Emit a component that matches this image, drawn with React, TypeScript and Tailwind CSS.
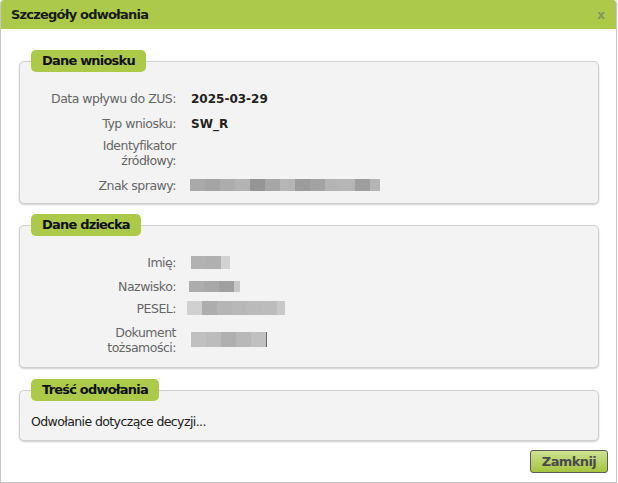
import React from "react";

type Block = { w: string; c: string };

const znak: Block[] = [
  { w: "w-[15px]", c: "bg-[#a9a9a9]" },
  { w: "w-[15px]", c: "bg-[#a4a4a4]" },
  { w: "w-[15px]", c: "bg-[#adadad]" },
  { w: "w-[15px]", c: "bg-[#b3b3b3]" },
  { w: "w-[15px]", c: "bg-[#959595]" },
  { w: "w-[15px]", c: "bg-[#a6a6a6]" },
  { w: "w-[15px]", c: "bg-[#b5b5b5]" },
  { w: "w-[15px]", c: "bg-[#9c9c9c]" },
  { w: "w-[15px]", c: "bg-[#a3a3a3]" },
  { w: "w-[15px]", c: "bg-[#b4b4b4]" },
  { w: "w-[15px]", c: "bg-[#b5b5b5]" },
  { w: "w-[15px]", c: "bg-[#9e9e9e]" },
  { w: "w-[10px]", c: "bg-[#b5b5b5]" },
];

const imie: Block[] = [
  { w: "w-[15px]", c: "bg-[#b2b2b2]" },
  { w: "w-[15px]", c: "bg-[#b0b0b0]" },
  { w: "w-[9px]", c: "bg-[#d2d2d2]" },
];

const nazwisko: Block[] = [
  { w: "w-[15px]", c: "bg-[#adadad]" },
  { w: "w-[15px]", c: "bg-[#a8a8a8]" },
  { w: "w-[15px]", c: "bg-[#a0a0a0]" },
  { w: "w-[6px]", c: "bg-[#c8c8c8]" },
];

const pesel: Block[] = [
  { w: "w-[15px]", c: "bg-[#d0d0d0]" },
  { w: "w-[15px]", c: "bg-[#adadad]" },
  { w: "w-[15px]", c: "bg-[#b5b5b5]" },
  { w: "w-[15px]", c: "bg-[#b8b8b8]" },
  { w: "w-[15px]", c: "bg-[#bababa]" },
  { w: "w-[15px]", c: "bg-[#bcbcbc]" },
  { w: "w-[8px]", c: "bg-[#c8c8c8]" },
];

const dokument: Block[] = [
  { w: "w-[15px]", c: "bg-[#c0c0c0]" },
  { w: "w-[15px]", c: "bg-[#bcbcbc]" },
  { w: "w-[15px]", c: "bg-[#b0b0b0]" },
  { w: "w-[15px]", c: "bg-[#b8b8b8]" },
  { w: "w-[15px]", c: "bg-[#c0c0c0]" },
  { w: "w-px", c: "bg-[#666666]" },
];

const Blur = ({ blocks, h, ml }: { blocks: Block[]; h: string; ml: string }) => (
  <div className={`flex ${h} ${ml}`}>
    {blocks.map((b, i) => (
      <span key={i} className={`${b.w} ${b.c} h-full`} />
    ))}
  </div>
);

const Section = ({
  title,
  box,
  children,
}: {
  title: string;
  box: string;
  children: React.ReactNode;
}) => (
  <div className="flex flex-col">
    <div className="relative z-10 ml-[12px] self-start h-[22px] rounded-[5px] bg-[#acc94a] px-[11px] text-[13px] font-bold tracking-[-0.8px] leading-[22px] text-[#111]">
      {title}
    </div>
    <div
      className={`-mt-[11px] rounded-[5px] border border-[#d0d0d0] bg-[#f3f3f3] shadow-[0_1px_2px_rgba(0,0,0,0.2)] ${box}`}
    >
      {children}
    </div>
  </div>
);

const Row = ({
  label,
  h,
  children,
}: {
  label: React.ReactNode;
  h: string;
  children?: React.ReactNode;
}) => (
  <div className={`flex items-center ${h}`}>
    <div className="w-[156px] shrink-0 text-right text-[12.5px] tracking-[-0.5px] leading-[15px] text-[#666]">
      {label}
    </div>
    <div className="flex items-center pl-[15px]">{children}</div>
  </div>
);

export default function App() {
  return (
    <div
      className="w-[617px] h-[483px] bg-white"
      style={{ fontFamily: '"DejaVu Sans", Verdana, sans-serif' }}
    >
      <div className="flex h-full flex-col rounded-t-[4px] border-x border-b border-[#c6c6c6] overflow-hidden">
        <div className="flex h-[29px] shrink-0 items-center justify-between bg-[#acc94a] pl-[10px] pr-[11px]">
          <span className="text-[13px] font-bold tracking-[-0.8px] text-[#1a1a1a]">Szczegóły odwołania</span>
          <span className="text-[12px] font-bold text-[#7f9a5a]">x</span>
        </div>

        <div className="flex flex-1 flex-col pl-[18px] pr-[17px] pt-[21px]">
          <Section title="Dane wniosku" box="h-[143px] pt-[24px]">
            <Row label="Data wpływu do ZUS:" h="h-[25px]">
              <span className="text-[12px] font-bold text-[#222]">2025-03-29</span>
            </Row>
            <Row label="Typ wniosku:" h="h-[25px]">
              <span className="text-[12px] font-bold text-[#222]">SW_R</span>
            </Row>
            <Row label={<>Identyfikator<br />źródłowy:</>} h="h-[34px]" />
            <Row label="Znak sprawy:" h="h-[30px]">
              <Blur blocks={znak} h="h-[12px]" ml="-ml-px" />
            </Row>
          </Section>

          <div className="mt-[10px]">
            <Section title="Dane dziecka" box="h-[143px] pt-[24px]">
              <Row label="Imię:" h="h-[24px]">
                <Blur blocks={imie} h="h-[13px]" ml="ml-0" />
              </Row>
              <Row label="Nazwisko:" h="h-[24px]">
                <Blur blocks={nazwisko} h="h-[11px]" ml="-ml-[2px]" />
              </Row>
              <Row label="PESEL:" h="h-[20px]">
                <Blur blocks={pesel} h="h-[14px]" ml="-ml-[4px]" />
              </Row>
              <Row label={<>Dokument<br />tożsamości:</>} h="h-[43px]">
                <Blur blocks={dokument} h="h-[15px]" ml="ml-0" />
              </Row>
            </Section>
          </div>

          <div className="mt-[11px]">
            <Section title="Treść odwołania" box="h-[51px] pt-[23px] pl-[11px]">
              <span className="block text-[12.5px] tracking-[-0.6px] leading-[15px] text-[#222]">
                Odwołanie dotyczące decyzji...
              </span>
            </Section>
          </div>

          <div className="mt-[9px] -mr-[9px] flex justify-end">
            <button className="h-[23px] w-[78px] rounded-[3px] border border-[#5a5a5a] bg-gradient-to-b from-[#cfe290] to-[#a4c43c] text-[13px] font-bold tracking-[-0.6px] text-[#4a4a4a]">
              Zamknij
            </button>
          </div>
        </div>
      </div>
    </div>
  );
}
